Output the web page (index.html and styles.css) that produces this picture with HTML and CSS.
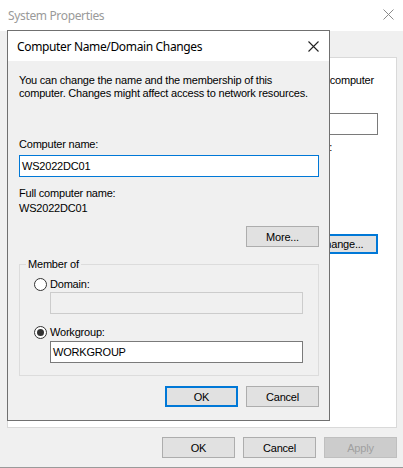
FILE: index.html
```html
<!DOCTYPE html>
<html lang="en">
<head>
    <meta charset="UTF-8">
    <meta name="viewport" content="width=device-width, initial-scale=1.0">
    <title>System Properties</title>
    <link rel="stylesheet" href="styles.css">
</head>
<body>
    <div class="window">
        <div class="titlebar">
            <span class="title">System Properties</span>
            <svg class="close close-inactive" width="11" height="11" viewBox="0 0 11 11">
                <path d="M0.5 0.5 L10.5 10.5 M10.5 0.5 L0.5 10.5" stroke="#8a8a8a" stroke-width="1" fill="none"/>
            </svg>
        </div>

        <div class="content">
            <div class="panel">
                <p class="panel-line intro">your computer</p>
                <div class="panel-row">
                    <div class="box box-plain desc-box"></div>
                </div>
                <p class="panel-line hint">computer name:</p>
                <div class="panel-row change-row">
                    <button class="btn btn-default">Change...</button>
                </div>
            </div>

            <div class="actions">
                <button class="btn">OK</button>
                <button class="btn">Cancel</button>
                <button class="btn" disabled>Apply</button>
            </div>
        </div>

        <!-- modal dialog on top of the properties window -->
        <div class="dialog">
            <div class="dialog-titlebar">
                <span class="dialog-title">Computer Name/Domain Changes</span>
                <svg class="close" width="11" height="11" viewBox="0 0 11 11">
                    <path d="M0.5 0.5 L10.5 10.5 M10.5 0.5 L0.5 10.5" stroke="#222" stroke-width="1.1" fill="none"/>
                </svg>
            </div>

            <div class="dialog-body">
                <p class="text">You can change the name and the membership of this computer. Changes might affect access to network resources.</p>

                <label class="text name-label">Computer name:</label>
                <div class="box box-focus">WS2022DC01</div>

                <p class="text full-label">Full computer name:</p>
                <p class="text full-value">WS2022DC01</p>

                <div class="button-row more-row">
                    <button class="btn">More...</button>
                </div>

                <fieldset class="group">
                    <legend>Member of</legend>

                    <div class="radio-row">
                        <span class="radio"></span>
                        <span class="text">Domain:</span>
                    </div>
                    <div class="box box-disabled indent"></div>

                    <div class="radio-row workgroup-row">
                        <span class="radio checked"></span>
                        <span class="text">Workgroup:</span>
                    </div>
                    <div class="box box-plain indent">WORKGROUP</div>
                </fieldset>

                <div class="button-row dialog-actions">
                    <button class="btn btn-default">OK</button>
                    <button class="btn">Cancel</button>
                </div>
            </div>
        </div>
    </div>
</body>
</html>
```

FILE: styles.css
```css
body {
    margin: 0;
    font-family: "Liberation Sans", Arial, sans-serif;
    font-size: 11px;
    line-height: 13px;
    letter-spacing: -0.2px;
    color: #000;
    background: #f0f0f0;
}
p {
    margin: 0;
}
.window {
    position: relative;
    width: 403px;
    height: 467px;
    border-bottom: 1px solid #9a9a9a;
    background: #f0f0f0;
}
.titlebar {
    height: 31px;
    background: #fff;
    display: flex;
    align-items: center;
    justify-content: space-between;
    padding: 0 9px 0 8px;
    box-sizing: border-box;
}
.title, .dialog-title {
    font-family: "Noto Sans", sans-serif;
    font-size: 12px;
    letter-spacing: -0.35px;
}
.title {
    color: #9a9a9a;
    margin-top: -1px;
}
.close {
    display: block;
}
.close-inactive {
    margin-top: -2px;
}
.content {
    padding: 26px 6px 0 7px;
}
.panel {
    height: 371px;
    box-sizing: border-box;
    border: 1px solid #d9d9d9;
    background: #fff;
    padding: 16px 18px 0 0;
}
.panel-line {
    text-align: right;
    white-space: nowrap;
}
.intro {
    margin-right: 4px;
}
.panel-row {
    display: flex;
    justify-content: flex-end;
}
.desc-box {
    width: 220px;
    height: 20px;
    margin-top: 26px;
}
.hint {
    margin: 6px 46px 0 0;
}
.change-row {
    margin-top: 80px;
}
.change-row .btn {
    width: 75px;
    height: 20px;
}
.actions {
    display: flex;
    justify-content: flex-end;
    gap: 8px;
    margin-top: 9px;
}

/* buttons */
.btn {
    width: 73px;
    height: 21px;
    box-sizing: border-box;
    padding: 0;
    font-family: inherit;
    font-size: 11px;
    letter-spacing: inherit;
    color: #000;
    background: #e1e1e1;
    border: 1px solid #adadad;
}
.btn-default {
    border: 2px solid #0078d7;
}
.btn:disabled {
    background: #cccccc;
    border-color: #bfbfbf;
    color: #a0a0a0;
}

/* input boxes */
.box {
    height: 22px;
    box-sizing: border-box;
    padding: 0 2px;
    line-height: 20px;
    background: #fff;
    border: 1px solid #7a7a7a;
}
.box-focus {
    border-color: #0078d7;
    margin-top: 4px;
}
.box-disabled {
    background: #f0f0f0;
    border-color: #cccccc;
}

/* dialog */
.dialog {
    position: absolute;
    left: 7px;
    top: 30px;
    width: 323px;
    box-sizing: border-box;
    border: 1px solid #707070;
    background: #f0f0f0;
}
.dialog-titlebar {
    height: 30px;
    background: #fff;
    display: flex;
    align-items: center;
    justify-content: space-between;
    padding: 0 10px 0 9px;
}
.dialog-body {
    padding: 13px 10px 13px 11px;
}
.text {
    display: block;
}
.name-label {
    margin-top: 38px;
}
.full-label {
    margin-top: 10px;
}
.full-value {
    margin-top: 2px;
}
.button-row {
    display: flex;
    justify-content: flex-end;
    gap: 8px;
}
.more-row {
    margin-top: 11px;
}
.group {
    margin: 11px 0 0;
    padding: 6px 15px 12px 14px;
    border: 1px solid #dcdcdc;
}
.group legend {
    padding: 0 2px;
    margin-left: -8px;
}
.radio-row {
    display: flex;
    align-items: center;
    gap: 3px;
    height: 14px;
}
.radio {
    width: 13px;
    height: 13px;
    box-sizing: border-box;
    border: 1px solid #333;
    border-radius: 50%;
    background: #fff;
    display: flex;
    align-items: center;
    justify-content: center;
}
.radio.checked::after {
    content: "";
    width: 7px;
    height: 7px;
    border-radius: 50%;
    background: #333;
}
.indent {
    margin-left: 16px;
    margin-top: 1px;
}
.workgroup-row {
    margin-top: 11px;
}
.workgroup-row + .indent {
    margin-top: 2px;
}
.dialog-actions {
    margin-top: 10px;
}
```
